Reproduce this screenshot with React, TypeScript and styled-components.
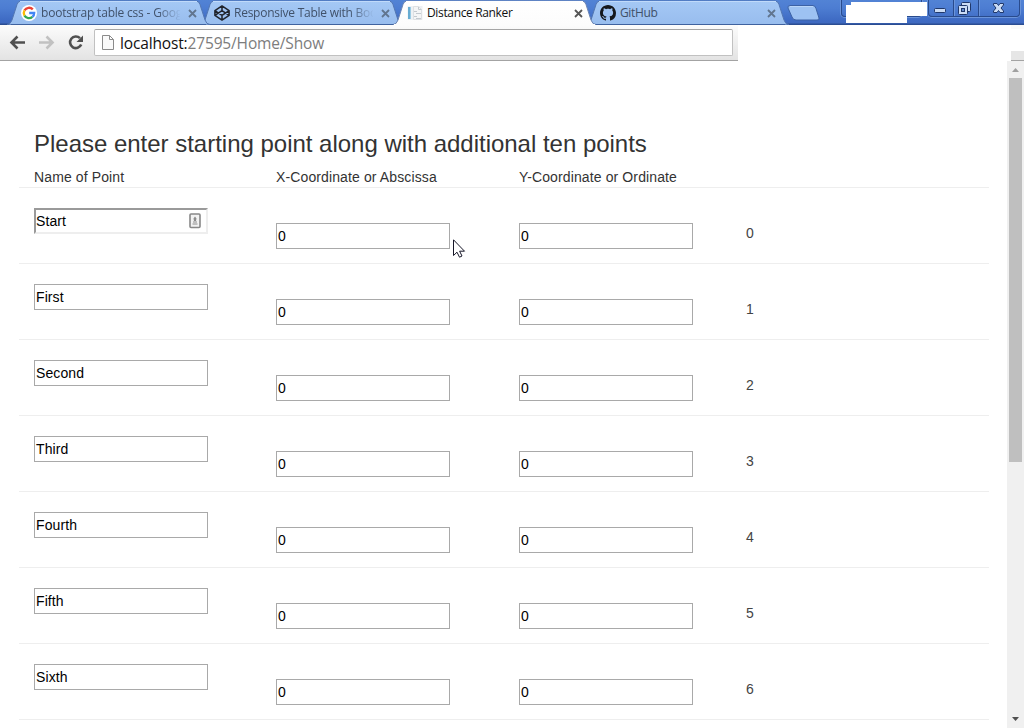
import React from "react";
import styled, { createGlobalStyle, css } from "styled-components";

const GlobalStyle = createGlobalStyle`
  * { box-sizing: border-box; }
  html, body { margin: 0; padding: 0; background: #fff; overflow: hidden; }
  body { font-family: "Liberation Sans", Arial, sans-serif; font-size: 14px; color: #333; }
`;

const Browser = styled.div`
  position: relative;
  width: 1024px;
  height: 728px;
  overflow: hidden;
  display: flex;
  flex-direction: column;
`;

const TabStrip = styled.header`
  display: flex;
  flex: none;
  height: 25px;
  padding-left: 7px;
  background: linear-gradient(#5283d5 0, #4d7dd2 8px, #3f6bc4 20px, #3e69c0 23px, #2b4d92 24px, #2b4d92 25px);
`;

const Tab = styled.div<{ $order: number }>`
  position: relative;
  z-index: ${(p) => p.$order};
  display: flex;
  align-items: center;
  flex: none;
  width: 203px;
  height: 25px;
  margin-right: -10px;
  padding: 0 10px 0 14px;
`;

const TabShape = styled.svg`
  position: absolute;
  inset: 0;
  z-index: -1;
`;

const Favicon = styled.svg`
  flex: none;
  width: 16px;
  height: 16px;
  margin-top: 1px;
`;

const TabTitle = styled.span<{ $active: boolean; $faded: boolean; $spacing: number }>`
  width: 139px;
  margin-left: 4px;
  white-space: nowrap;
  font: 12px/20px "Open Sans", "Noto Sans", sans-serif;
  letter-spacing: ${(p) => p.$spacing}px;
  color: ${(p) => (p.$active ? "#111" : "#40516a")};
  ${(p) =>
    p.$faded &&
    css`
      mask-image: linear-gradient(90deg, #000 116px, transparent 140px);
    `}
`;

const CloseIcon = styled.svg`
  flex: none;
  width: 9px;
  height: 9px;
  margin: 2px 0 0 8px;
`;

const NewTab = styled.svg`
  flex: none;
  width: 33px;
  height: 17px;
  margin: 5px 0 0 8px;
`;

const WindowControls = styled.div`
  position: absolute;
  z-index: 10;
  top: 0;
  left: 928px;
  display: flex;
  width: 92px;
  height: 17px;
  border: 1px solid #294b8d;
  border-top: 0;
  border-radius: 0 0 4px 4px;
  box-shadow: 0 0 0 1px #6b94da;
`;

const WindowButton = styled.div<{ $width: number }>`
  width: ${(p) => p.$width}px;
  height: 16px;
  border-left: 1px solid #294b8d;
  box-shadow: inset 1px 0 #6b94da;
  &:first-child { border-left: 0; box-shadow: none; }
  svg { display: block; }
`;

const ProfileButton = styled.div`
  position: absolute;
  z-index: 8;
  top: 0;
  left: 841px;
  width: 81px;
  height: 17px;
  border: 1px solid #294b8d;
  border-top: 0;
  border-radius: 0 0 4px 4px;
  box-shadow: 0 0 0 1px #6b94da;
`;

const Cover = styled.svg`
  position: absolute;
  z-index: 11;
  top: 2px;
  left: 846px;
`;

const Toolbar = styled.nav`
  display: flex;
  flex: none;
  align-items: center;
  width: 738px;
  height: 36px;
  padding: 0 5px 1px 8px;
  border-bottom: 1px solid #a3a3a3;
  background: linear-gradient(#fcfcfc, #e3e3e3);
`;

const NavIcons = styled.svg`
  flex: none;
  width: 80px;
  height: 26px;
`;

const AddressBar = styled.div`
  display: flex;
  align-items: center;
  width: 639px;
  height: 27px;
  margin-left: 6px;
  margin-top: 1px;
  padding-left: 7px;
  border: 1px solid #c1c1c1;
  border-top-color: #a5a5a5;
  border-radius: 2px;
  background: #fff;
`;

const Url = styled.span`
  margin-left: 5px;
  font: 15.5px/24px "Open Sans", "Noto Sans", sans-serif;
  letter-spacing: -0.15px;
  color: #7d7d7d;
  b { font-weight: 400; color: #111; }
`;

const Viewport = styled.div`
  display: flex;
  flex: 1;
  min-height: 0;
`;

const Page = styled.main`
  flex: none;
  width: 1007px;
  padding: 70px 18px 0 19px;
  overflow: hidden;
`;

const Heading = styled.h3`
  margin: 0 0 0 15px;
  font-size: 24px;
  font-weight: 400;
  line-height: 26px;
  letter-spacing: -0.015px;
`;

const Grid = styled.div`
  display: grid;
  grid-template-columns: 242px 243px 242px 243px;
  width: 970px;
  border-bottom: 1px solid #eee;
`;

const HeaderRow = styled(Grid)`
  height: 31px;
  padding-top: 10px;
  line-height: 20px;
  letter-spacing: 0.12px;
`;

const PointRow = styled(Grid)`
  height: 76px;
`;

const Cell = styled.div<{ $top?: number }>`
  padding: ${(p) => p.$top ?? 0}px 0 0 15px;
`;

const Distance = styled.div`
  padding: 35px 0 0 0;
  line-height: 20px;
  color: #444;
`;

const Field = styled.div<{ $inset?: boolean }>`
  display: flex;
  align-items: center;
  justify-content: space-between;
  width: 174px;
  height: 26px;
  padding: 0 5px 0 1px;
  border: 1px solid #a9a9a9;
  background: #fff;
  color: #000;
  letter-spacing: 0.1px;
  ${(p) =>
    p.$inset &&
    css`
      padding-left: 0;
      border: 2px solid;
      border-color: #9a9a9a #eee #eee #9a9a9a;
    `}
`;

const ScrollTrack = styled.aside`
  display: flex;
  flex-direction: column;
  width: 17px;
  padding: 0 2px;
  background: #f0f0f0;
`;

const ScrollArrow = styled.svg`
  flex: none;
  width: 13px;
  height: 17px;
`;

const ScrollThumb = styled.div`
  height: 384px;
  margin-bottom: auto;
  background: #bfbfbf;
`;

const ToolbarEnd = styled.div`
  position: absolute;
  top: 51px;
  left: 1011px;
  width: 13px;
  height: 10px;
  border-bottom: 1px solid #a3a3a3;
  background: #e6e6e6;
`;

const ToolbarEdge = styled(ToolbarEnd)`
  top: 25px;
  height: 4px;
  border: 0;
  background: #fafafa;
`;

const Pointer = styled.svg`
  position: absolute;
  top: 239px;
  left: 453px;
`;

const GoogleIcon = () => (
  <Favicon viewBox="0 0 16 16">
    <circle cx="8" cy="8" r="8" fill="#fff" />
    <g fill="none" strokeWidth="2.3">
      <path d="M3.5 5.4A5.2 5.2 0 0 1 11.8 4.4" stroke="#ea4335" />
      <path d="M3.5 5.4a5.2 5.2 0 0 0 0 5.2" stroke="#fbbc05" />
      <path d="M3.5 10.6a5.2 5.2 0 0 0 7.9 1.3" stroke="#34a853" />
      <path d="M8.2 8h5a5 5 0 0 1-1.8 3.9" stroke="#4285f4" />
    </g>
  </Favicon>
);

const CodepenIcon = () => (
  <Favicon viewBox="0 0 16 16" fill="none" stroke="#20242c" strokeWidth="1.5" strokeLinejoin="round">
    <path d="M8 .9l7.1 4.7v4.8L8 15.1.9 10.4V5.6zM8 .9v4.7M8 10.4v4.7M.9 5.6L8 10.4l7.1-4.8M.9 10.4L8 5.6l7.1 4.8" />
  </Favicon>
);

const PageIcon = () => (
  <Favicon viewBox="0 0 16 16">
    <path d="M.5 1h15v14H.5z" fill="#eef1f4" />
    <path d="M1 2h3v12H1z" fill="#67acd2" />
    <path d="M3 2h1v12H3z" fill="#9ccce5" />
    <path d="M6.500 1.500h5l3 3v10h-8z" fill="#f4f5f6" stroke="#dde0e3" />
    <path d="M7 6.500h3M9 8.500h5M7 11.500h3M9 13.500h5M11.500 2v2.500h3" stroke="#c3c9cf" fill="none" />
  </Favicon>
);

const GithubIcon = () => (
  <Favicon viewBox="0 0 16 16" fill="#15181c">
    <path d="M8 0C3.58 0 0 3.58 0 8c0 3.54 2.29 6.53 5.47 7.59.4.07.55-.17.55-.38 0-.19-.01-.82-.01-1.49-2.01.37-2.53-.49-2.69-.94-.09-.23-.48-.94-.82-1.13-.28-.15-.68-.52-.01-.53.63-.01 1.08.58 1.23.82.72 1.21 1.87.87 2.33.66.07-.52.28-.87.51-1.07-1.78-.2-3.64-.89-3.64-3.95 0-.87.31-1.59.82-2.15-.08-.2-.36-1.02.08-2.12 0 0 .67-.21 2.2.82.64-.18 1.32-.27 2-.27s1.36.09 2 .27c1.53-1.04 2.2-.82 2.2-.82.44 1.1.16 1.92.08 2.12.51.56.82 1.27.82 2.15 0 3.07-1.87 3.75-3.65 3.95.29.25.54.73.54 1.48 0 1.07-.01 1.93-.01 2.2 0 .21.15.46.55.38A8.01 8.01 0 0 0 16 8c0-4.42-3.58-8-8-8z" />
  </Favicon>
);

const tabs = [
  { title: "bootstrap table css - Goog", icon: <GoogleIcon />, faded: true, spacing: -0.2, order: 4 },
  { title: "Responsive Table with Boo", icon: <CodepenIcon />, faded: true, spacing: -0.25, order: 3 },
  { title: "Distance Ranker", icon: <PageIcon />, active: true, spacing: -0.35, order: 6 },
  { title: "GitHub", icon: <GithubIcon />, spacing: -0.35, order: 2 },
];

const points = ["Start", "First", "Second", "Third", "Fourth", "Fifth", "Sixth"];

const ContactBadge = () => (
  <svg width="12" height="16" viewBox="0 0 12 16">
    <rect x="1" y="1" width="10" height="13.5" rx="1" fill="#f2f2f2" stroke="#888" strokeWidth="1.6" />
    <path d="M6 3.500l1.500 2L7 8H5l-.5-2.500zM4 8.500h4v1H4zM3.500 10.500h5v1h-5z" fill="#8c8c8c" />
  </svg>
);

export default function App() {
  return (
    <>
      <GlobalStyle />
      <Browser>
        <TabStrip>
          {tabs.map((t) => (
            <Tab key={t.title} $order={t.order}>
              <TabShape width="203" height="25" viewBox="0 0 203 25">
                <defs>
                  <linearGradient id={`fill${t.order}`} x1="0" y1="0" x2="0" y2="1">
                    <stop stopColor={t.active ? "#ffffff" : "#a4c8f5"} />
                    <stop offset="1" stopColor={t.active ? "#fcfcfc" : "#98bdee"} />
                  </linearGradient>
                </defs>
                <path
                  d="M0 24.5Q3.5 24.5 5 20L10 4.5Q11 1 14 1H189Q192 1 193 4.5L198 20Q199.500 24.500 203 24.500"
                  fill={`url(#fill${t.order})`}
                  stroke={t.active ? "#6c85b3" : "#5276b2"}
                />
                <path d="M13 1.500H190" stroke={t.active ? "#fff" : "#c0dafa"} />
                {t.active && <path d="M1 24.500H202" stroke="#fcfcfc" />}
                {!t.active && <path d="M4 24.500H199" stroke="#3f629f" />}
              </TabShape>
              {t.icon}
              <TabTitle $active={!!t.active} $faded={!!t.faded} $spacing={t.spacing}>
                {t.title}
              </TabTitle>
              <CloseIcon viewBox="0 0 9 9">
                <path d="M1 1l7 7M8 1L1 8" stroke={t.active ? "#555" : "#61758f"} strokeWidth="1.8" />
              </CloseIcon>
            </Tab>
          ))}
          <NewTab viewBox="0 0 33 17">
            <path d="M3 .5h23q2 0 3 3l3 9.500q.5 2-2 2H9q-3 0-4-3L1 3Q.5.5 3 .5z" fill="#9dc2f2" stroke="#3c62a5" />
            <path d="M3 1.500h23" stroke="#b9d5f8" />
          </NewTab>
        </TabStrip>
        <ProfileButton />
        <Cover width="81" height="21" viewBox="0 0 81 21">
          <path d="M5 0h76v14H61v7H0V3h5z" fill="#fff" />
        </Cover>
        <WindowControls>
          <WindowButton $width={24}>
            <svg width="24" height="16" viewBox="0 0 24 16">
              <rect x="5.500" y="8.500" width="11" height="4" rx="1" fill="#cbdcf5" stroke="#20386b" />
            </svg>
          </WindowButton>
          <WindowButton $width={25}>
            <svg width="24" height="16" viewBox="0 0 24 16" fill="#cbdcf5" stroke="#20386b">
              <rect x="7.500" y="2.500" width="9" height="9" rx="1" />
              <rect x="4.500" y="5.500" width="9" height="9" rx="1" />
              <rect x="7.500" y="8.500" width="3" height="3" fill="#648bcf" />
            </svg>
          </WindowButton>
          <WindowButton $width={41}>
            <svg width="40" height="16" viewBox="0 0 40 16">
              <path d="M14.500 3.500h3.500l1.500 2 1.500-2h3.500v1.500L22 8l2.500 3v1.500H21l-1.500-2-1.500 2h-3.500V11L17 8l-2.500-3z" fill="#cbdcf5" stroke="#20386b" />
            </svg>
          </WindowButton>
        </WindowControls>
        <Toolbar>
          <NavIcons viewBox="0 0 80 26" fill="none" strokeWidth="2.600">
            <path d="M17 13.500H4M9.500 7.500l-6 6 6 6" stroke="#505050" />
            <path d="M31 13.500h13M38.500 7.500l6 6-6 6" stroke="#c1c1c1" />
            <path d="M72 9.200a5.800 5.800 0 1 0 1.200 6.300" stroke="#505050" />
            <path d="M75 6.500v6.500h-6.500z" fill="#505050" />
          </NavIcons>
          <AddressBar>
            <svg width="13" height="17" viewBox="0 0 13 17" fill="#fafafa" stroke="#8b8b8b">
              <path d="M.5 1.500h7l4 4v10H.5zM7.500 1.500v4h4" />
            </svg>
            <Url>
              <b>localhost:</b>27595/Home/Show
            </Url>
          </AddressBar>
        </Toolbar>
        <ToolbarEdge />
        <ToolbarEnd />
        <Viewport>
          <Page>
            <Heading>Please enter starting point along with additional ten points</Heading>
            <HeaderRow>
              <Cell>Name of Point</Cell>
              <Cell>X-Coordinate or Abscissa</Cell>
              <Cell>Y-Coordinate or Ordinate</Cell>
            </HeaderRow>
            {points.map((name, i) => (
              <PointRow key={name}>
                <Cell $top={20}>
                  <Field $inset={i === 0}>
                    {name}
                    {i === 0 && <ContactBadge />}
                  </Field>
                </Cell>
                <Cell $top={35}>
                  <Field>0</Field>
                </Cell>
                <Cell $top={35}>
                  <Field>0</Field>
                </Cell>
                <Distance>{i}</Distance>
              </PointRow>
            ))}
          </Page>
          <ScrollTrack>
            <ScrollArrow viewBox="0 0 13 17">
              <path d="M3 11h7L6.500 7z" fill="#a0a0a0" />
            </ScrollArrow>
            <ScrollThumb />
            <ScrollArrow viewBox="0 0 13 17">
              <path d="M3 6h7l-3.500 4z" fill="#505050" />
            </ScrollArrow>
          </ScrollTrack>
        </Viewport>
        <Pointer width="13" height="20" viewBox="0 0 13 20">
          <path d="M.5.800v15.700l3.500-3.300 2.500 5 2.500-1.200-2.400-4.800h4.900z" fill="#fff" stroke="#171728" />
        </Pointer>
      </Browser>
    </>
  );
}
